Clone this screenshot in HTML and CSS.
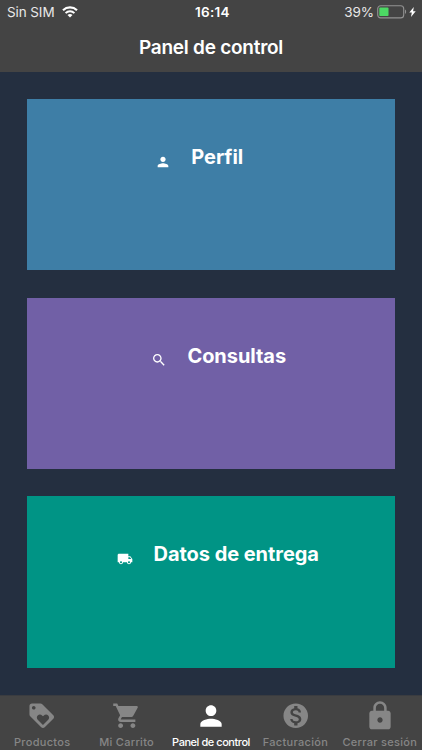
FILE: index.html
```
<!DOCTYPE html>
<html lang="es">
<head>
    <meta charset="utf-8">
    <title>Panel de control</title>
    <link rel="stylesheet" href="styles.css">
</head>
<body>
    <header class="header">
        <div class="status">
            <div class="status-left">
                <span class="carrier">Sin SIM</span>
                <svg class="wifi" viewBox="0 0 16 12">
                    <path d="M1 4.2a10.2 10.2 0 0 1 14 0" fill="none" stroke="#fff" stroke-width="2.2"/>
                    <path d="M3.6 7.1a6.3 6.3 0 0 1 8.8 0" fill="none" stroke="#fff" stroke-width="2"/>
                    <path d="M8 11.6L5.5 9.1a3.6 3.6 0 0 1 5 0z" fill="#fff"/>
                </svg>
            </div>
            <span class="time">16:14</span>
            <div class="status-right">
                <span class="percent">39%</span>
                <svg class="battery" viewBox="0 0 30 14">
                    <rect x=".7" y=".7" width="26" height="12.2" rx="3" fill="none" stroke="#929292" stroke-width="1.1"/>
                    <rect x="2.3" y="2.6" width="9.2" height="8.4" rx=".8" fill="#4cd964"/>
                    <path d="M28 4.6c1.5.6 1.5 3.8 0 4.4z" fill="#929292"/>
                </svg>
                <svg class="bolt" viewBox="0 0 7 10">
                    <path d="M4.8 0L.3 5.6h2.5L2 10l4.700-5.800H4.100z" fill="#fff"/>
                </svg>
            </div>
        </div>
        <h1 class="title">Panel de control</h1>
    </header>

    <main class="cards">
        <div class="card profile">
            <svg class="card-icon" viewBox="0 0 24 24"><path d="M12 12c2.21 0 4-1.79 4-4s-1.79-4-4-4-4 1.79-4 4 1.79 4 4 4zm0 2c-2.67 0-8 1.34-8 4v2h16v-2c0-2.66-5.33-4-8-4z"/></svg>
            <span class="card-text">Perfil</span>
        </div>
        <div class="card queries">
            <svg class="card-icon" viewBox="0 0 24 24"><path d="M15.5 14h-.79l-.28-.27C15.41 12.59 16 11.11 16 9.5 16 5.91 13.09 3 9.5 3S3 5.91 3 9.5 5.91 16 9.5 16c1.61 0 3.09-.59 4.23-1.57l.27.28v.79l5 4.99L20.49 19l-4.99-5zm-6 0C7.01 14 5 11.99 5 9.5S7.01 5 9.5 5 14 7.01 14 9.5 11.99 14 9.5 14z"/></svg>
            <span class="card-text">Consultas</span>
        </div>
        <div class="card delivery">
            <svg class="card-icon" viewBox="0 0 24 24"><path d="M20 8h-3V4H3c-1.1 0-2 .9-2 2v11h2c0 1.66 1.34 3 3 3s3-1.34 3-3h6c0 1.66 1.34 3 3 3s3-1.34 3-3h2v-5l-3-4zM6 18.5c-.83 0-1.5-.67-1.5-1.5s.67-1.5 1.5-1.5 1.5.67 1.5 1.5-.67 1.5-1.5 1.5zm13.5-9l1.96 2.5H17V9.5h2.5zm-1.5 9c-.83 0-1.5-.67-1.5-1.5s.67-1.5 1.5-1.5 1.5.67 1.5 1.5-.67 1.5-1.5 1.5z"/></svg>
            <span class="card-text">Datos de entrega</span>
        </div>
    </main>

    <nav class="tabs">
        <div class="tab">
            <div class="tab-icon"><svg class="icon-md" viewBox="0 0 24 24"><path d="M21.41 11.58l-9-9C12.05 2.22 11.55 2 11 2H4c-1.1 0-2 .9-2 2v7c0 .55.22 1.05.59 1.42l9 9c.36.36.86.58 1.41.58.55 0 1.05-.22 1.41-.59l7-7c.37-.36.59-.86.59-1.41 0-.55-.23-1.06-.59-1.42zM5.5 7C4.67 7 4 6.33 4 5.5S4.67 4 5.5 4 7 4.67 7 5.5 6.33 7 5.5 7zm11.77 8.27L13 19.54l-4.27-4.27C8.28 14.81 8 14.19 8 13.5c0-1.38 1.12-2.5 2.5-2.5.69 0 1.32.28 1.77.74l.73.72.73-.73c.45-.45 1.08-.73 1.77-.73 1.38 0 2.5 1.12 2.5 2.5 0 .69-.28 1.32-.73 1.77z"/></svg></div>
            <span class="tab-label">Productos</span>
        </div>
        <div class="tab">
            <div class="tab-icon"><svg class="icon-md" viewBox="0 0 24 24"><path d="M7 18c-1.1 0-1.99.9-1.99 2S5.9 22 7 22s2-.9 2-2-.9-2-2-2zM1 2v2h2l3.6 7.59-1.35 2.45c-.16.28-.25.61-.25.96 0 1.1.9 2 2 2h12v-2H7.42c-.14 0-.25-.11-.25-.25l.03-.12.9-1.63h7.45c.75 0 1.41-.41 1.75-1.03l3.58-6.49c.08-.14.12-.31.12-.48 0-.55-.45-1-1-1H5.21l-.94-2H1zm16 16c-1.1 0-1.99.9-1.99 2s.89 2 1.99 2 2-.9 2-2-.9-2-2-2z"/></svg></div>
            <span class="tab-label">Mi Carrito</span>
        </div>
        <div class="tab active">
            <div class="tab-icon"><svg class="icon-lg" viewBox="0 0 24 24"><path d="M12 12c2.21 0 4-1.79 4-4s-1.79-4-4-4-4 1.79-4 4 1.79 4 4 4zm0 2c-2.67 0-8 1.34-8 4v2h16v-2c0-2.66-5.33-4-8-4z"/></svg></div>
            <span class="tab-label">Panel de control</span>
        </div>
        <div class="tab">
            <div class="tab-icon"><svg class="icon-md" viewBox="0 0 24 24"><path d="M12 2C6.48 2 2 6.48 2 12s4.48 10 10 10 10-4.48 10-10S17.52 2 12 2zm1.41 16.09V20h-2.67v-1.93c-1.71-.36-3.16-1.46-3.27-3.4h1.96c.1 1.05.82 1.87 2.65 1.87 1.96 0 2.4-.98 2.4-1.59 0-.83-.44-1.61-2.67-2.14-2.48-.6-4.18-1.62-4.18-3.67 0-1.72 1.39-2.84 3.11-3.21V4h2.67v1.95c1.86.45 2.79 1.86 2.85 3.39H14.3c-.05-1.11-.64-1.87-2.22-1.87-1.5 0-2.4.68-2.4 1.64 0 .84.65 1.39 2.67 1.91s4.18 1.39 4.18 3.91c-.01 1.83-1.38 2.83-3.12 3.16z"/></svg></div>
            <span class="tab-label">Facturación</span>
        </div>
        <div class="tab">
            <div class="tab-icon"><svg class="icon-lg" viewBox="0 0 24 24"><path d="M18 8h-1V6c0-2.76-2.24-5-5-5S7 3.24 7 6v2H6c-1.1 0-2 .9-2 2v10c0 1.1.9 2 2 2h12c1.1 0 2-.9 2-2V10c0-1.1-.9-2-2-2zm-6 9c-1.1 0-2-.9-2-2s.9-2 2-2 2 .9 2 2-.9 2-2 2zm3.1-9H8.9V6c0-1.71 1.39-3.1 3.1-3.1s3.1 1.39 3.1 3.1v2z"/></svg></div>
            <span class="tab-label">Cerrar sesión</span>
        </div>
    </nav>
</body>
</html>
```
FILE: styles.css
```
* {
    box-sizing: border-box;
}

body {
    margin: 0;
    width: 422px;
    height: 750px;
    display: flex;
    flex-direction: column;
    overflow: hidden;
    background-color: #242f40;
    color: #fff;
    font-family: Inter, "Liberation Sans", sans-serif;
}

svg {
    display: block;
    flex: none;
}

/* Status bar and title */
.header {
    height: 72px;
    background-color: #444;
}

.status {
    display: grid;
    grid-template-columns: 1fr auto 1fr;
    align-items: center;
    height: 24px;
    padding: 0 6px 0 7px;
    font-size: 13.5px;
}

.status-left, .status-right {
    display: flex;
    align-items: center;
}

.status-right {
    justify-content: flex-end;
}

.carrier, .percent {
    color: #e8e8e8;
    letter-spacing: -0.1px;
}

.wifi {
    width: 16px;
    height: 12px;
    margin-left: 7px;
}

.time {
    padding-left: 2px;
    font-weight: 600;
    letter-spacing: 0.3px;
}

.battery {
    width: 30px;
    height: 14px;
    margin-left: 3px;
}

.bolt {
    width: 7px;
    height: 10px;
    margin-left: 2px;
}

.title {
    margin: 0;
    line-height: 48px;
    text-align: center;
    font-size: 19px;
    font-weight: 600;
    letter-spacing: -0.25px;
}

/* Cards */
.cards {
    flex: 1;
    display: flex;
    flex-direction: column;
    gap: 27.3px;
    padding: 27px 27px 27.4px;
}

.card {
    flex: 1;
    display: flex;
    justify-content: center;
    align-items: flex-start;
    padding-top: 45px;
}

.profile {
    background-color: #3e7ea6;
    padding-right: 24px;
}

.queries {
    background-color: #7160a6;
    padding-left: 15px;
}

.delivery {
    background-color: #009485;
    padding-left: 14px;
}

.card-icon {
    width: 16px;
    height: 16px;
    margin-top: 9.5px;
    margin-right: 20.5px;
    fill: #fff;
}

.card-text {
    line-height: 26px;
    font-size: 20px;
    font-weight: 700;
    letter-spacing: -0.05px;
}

/* Bottom tabs */
.tabs {
    display: flex;
    height: 55px;
    background-color: #444;
    border-top: 1px solid #3a3c40;
}

.tab {
    flex: 1;
    display: flex;
    flex-direction: column;
    align-items: center;
    color: #868686;
    fill: #868686;
}

.active {
    color: #fff;
    fill: #fff;
}

.tab-icon {
    height: 39px;
    display: flex;
    align-items: center;
}

.icon-md {
    width: 29.5px;
    height: 29.5px;
}

.icon-lg {
    width: 32px;
    height: 32px;
}

.tab-label {
    line-height: 14px;
    font-size: 11px;
    font-weight: 500;
    letter-spacing: 0.3px;
    white-space: nowrap;
}

.active .tab-label {
    letter-spacing: -0.45px;
}
```
